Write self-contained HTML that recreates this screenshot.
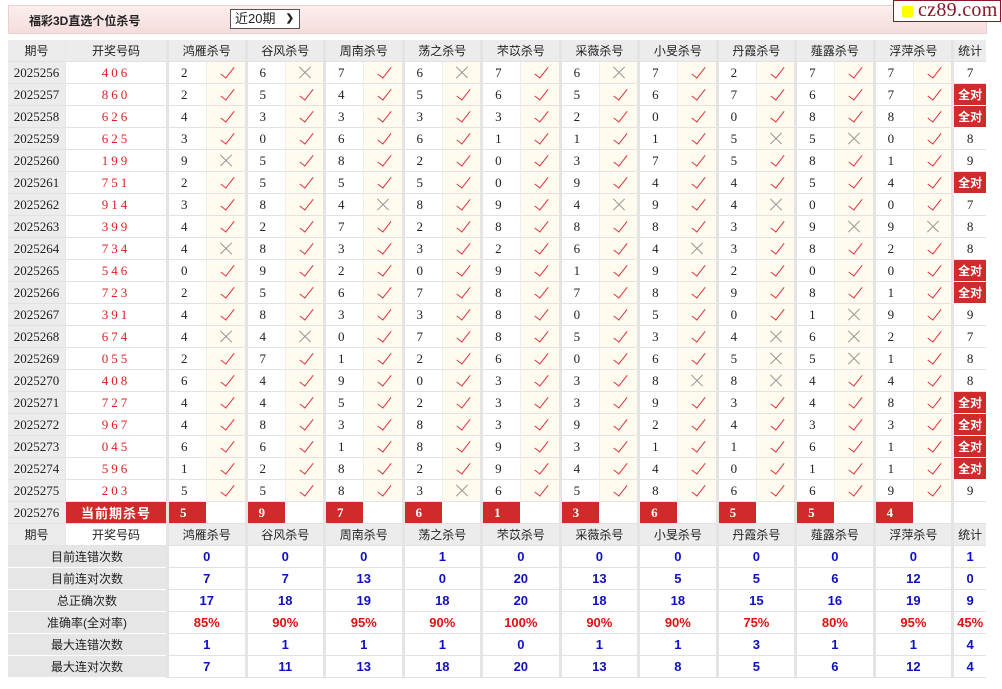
<!DOCTYPE html>
<html><head><meta charset="utf-8">
<style>
*{box-sizing:border-box;margin:0;padding:0}
body{width:1002px;height:689px;background:#fff;font-family:"Liberation Sans","Noto Sans CJK SC",sans-serif;font-size:12px;color:#222;position:relative;overflow:hidden}
.top{position:absolute;left:8px;top:5px;width:979px;height:29px;background:linear-gradient(#fbeeee,#f6dcdc);border:1px solid #ecd0d0}
.title{position:absolute;left:20px;top:6px;font-weight:bold;font-size:12px;color:#222}
.sel{position:absolute;left:221px;top:3px;width:70px;height:20px;border:1px solid #555;background:#fff;font-size:13px;line-height:18px;padding-left:4px}
.sel b{position:absolute;right:5px;top:0;font-size:10px}
.logo{position:absolute;left:893px;top:0;width:108px;height:22px;border:1px solid #8a1628;background:#fff;font-family:"Liberation Serif",serif;font-size:20px;color:#8a1628;line-height:19px;padding-left:24px;letter-spacing:.3px}
.logo i{position:absolute;left:8px;top:5px;width:11px;height:11px;background:#ff0}
table{position:absolute;left:8px;top:40px;border-collapse:separate;border-spacing:0;table-layout:fixed;width:978px}
td,th{height:22px;padding:0;border-bottom:1px solid #e2e2e2;text-align:center;font-weight:normal;white-space:nowrap;overflow:hidden}
th{background:#ececec;font-size:12px}
td.d{background:#ececec;font-family:"Liberation Serif",serif;font-size:13px}
td.k{font-family:"Liberation Serif",serif;font-size:13px;color:#e02020;letter-spacing:3px;border-left:1px solid #e8e8e8}
.g{border-left:3px solid #e4e4e4}
td.n{text-align:left;padding-left:12px;font-family:"Liberation Serif",serif;font-size:13px;background:#fff}
td.v,td.x{background:#fffbee;position:relative;border-left:1px solid #eee}
td.v:after{content:"";position:absolute;left:17px;top:2px;width:6px;height:13px;border-right:1.8px solid #e03040;border-bottom:1.8px solid #e03040;transform:rotate(38deg)}
td.x:before,td.x:after{content:"";position:absolute;left:11px;top:10px;width:16px;height:1px;background:#999;transform:rotate(45deg)}
td.x:after{transform:rotate(-45deg)}
td.t{font-family:"Liberation Serif",serif;font-size:13px;background:#fff}
td.q{background:#d02b2b;color:#fff;font-weight:bold;font-size:12px;border-bottom:1px solid #fff}
td.r{background:#d02b2b;color:#fff;font-weight:bold;font-family:"Liberation Serif",serif;font-size:13px;text-align:left;padding-left:11px}
td.e{background:#fff}
td.cur{background:#d02b2b;color:#fff;font-weight:bold;font-size:13px;letter-spacing:1px}
td.l{background:#e6e6e6;border-bottom:1px solid #fff;font-size:12px}
td.s{font-weight:bold;color:#1010c0;font-size:13px;background:#fff}
td.s.red{color:#e01010}
</style></head><body>
<div class="top"><div class="title">福彩3D直选个位杀号</div><div class="sel">近20期<b>&#10095;</b></div></div>
<div class="logo"><i></i>cz89.com</div>
<table>
<colgroup><col style="width:57px"><col style="width:101px">
<col style="width:40px"><col style="width:38.5px"><col style="width:40px"><col style="width:38.5px"><col style="width:40px"><col style="width:38.5px"><col style="width:40px"><col style="width:38.5px"><col style="width:40px"><col style="width:38.5px"><col style="width:40px"><col style="width:38.5px"><col style="width:40px"><col style="width:38.5px"><col style="width:40px"><col style="width:38.5px"><col style="width:40px"><col style="width:38.5px"><col style="width:40px"><col style="width:38.5px"><col style="width:35px"></colgroup>
<tr><th>期号</th><th style="border-left:1px solid #e8e8e8">开奖号码</th><th colspan="2" class="g">鸿雁杀号</th><th colspan="2" class="g">谷风杀号</th><th colspan="2" class="g">周南杀号</th><th colspan="2" class="g">荡之杀号</th><th colspan="2" class="g">芣苡杀号</th><th colspan="2" class="g">采薇杀号</th><th colspan="2" class="g">小旻杀号</th><th colspan="2" class="g">丹霞杀号</th><th colspan="2" class="g">薤露杀号</th><th colspan="2" class="g">浮萍杀号</th><th class="g">统计</th></tr>
<tr><td class="d">2025256</td><td class="k">406</td><td class="n g">2</td><td class="v"></td><td class="n g">6</td><td class="x"></td><td class="n g">7</td><td class="v"></td><td class="n g">6</td><td class="x"></td><td class="n g">7</td><td class="v"></td><td class="n g">6</td><td class="x"></td><td class="n g">7</td><td class="v"></td><td class="n g">2</td><td class="v"></td><td class="n g">7</td><td class="v"></td><td class="n g">7</td><td class="v"></td><td class="t g">7</td></tr>
<tr><td class="d">2025257</td><td class="k">860</td><td class="n g">2</td><td class="v"></td><td class="n g">5</td><td class="v"></td><td class="n g">4</td><td class="v"></td><td class="n g">5</td><td class="v"></td><td class="n g">6</td><td class="v"></td><td class="n g">5</td><td class="v"></td><td class="n g">6</td><td class="v"></td><td class="n g">7</td><td class="v"></td><td class="n g">6</td><td class="v"></td><td class="n g">7</td><td class="v"></td><td class="q g">全对</td></tr>
<tr><td class="d">2025258</td><td class="k">626</td><td class="n g">4</td><td class="v"></td><td class="n g">3</td><td class="v"></td><td class="n g">3</td><td class="v"></td><td class="n g">3</td><td class="v"></td><td class="n g">3</td><td class="v"></td><td class="n g">2</td><td class="v"></td><td class="n g">0</td><td class="v"></td><td class="n g">0</td><td class="v"></td><td class="n g">8</td><td class="v"></td><td class="n g">8</td><td class="v"></td><td class="q g">全对</td></tr>
<tr><td class="d">2025259</td><td class="k">625</td><td class="n g">3</td><td class="v"></td><td class="n g">0</td><td class="v"></td><td class="n g">6</td><td class="v"></td><td class="n g">6</td><td class="v"></td><td class="n g">1</td><td class="v"></td><td class="n g">1</td><td class="v"></td><td class="n g">1</td><td class="v"></td><td class="n g">5</td><td class="x"></td><td class="n g">5</td><td class="x"></td><td class="n g">0</td><td class="v"></td><td class="t g">8</td></tr>
<tr><td class="d">2025260</td><td class="k">199</td><td class="n g">9</td><td class="x"></td><td class="n g">5</td><td class="v"></td><td class="n g">8</td><td class="v"></td><td class="n g">2</td><td class="v"></td><td class="n g">0</td><td class="v"></td><td class="n g">3</td><td class="v"></td><td class="n g">7</td><td class="v"></td><td class="n g">5</td><td class="v"></td><td class="n g">8</td><td class="v"></td><td class="n g">1</td><td class="v"></td><td class="t g">9</td></tr>
<tr><td class="d">2025261</td><td class="k">751</td><td class="n g">2</td><td class="v"></td><td class="n g">5</td><td class="v"></td><td class="n g">5</td><td class="v"></td><td class="n g">5</td><td class="v"></td><td class="n g">0</td><td class="v"></td><td class="n g">9</td><td class="v"></td><td class="n g">4</td><td class="v"></td><td class="n g">4</td><td class="v"></td><td class="n g">5</td><td class="v"></td><td class="n g">4</td><td class="v"></td><td class="q g">全对</td></tr>
<tr><td class="d">2025262</td><td class="k">914</td><td class="n g">3</td><td class="v"></td><td class="n g">8</td><td class="v"></td><td class="n g">4</td><td class="x"></td><td class="n g">8</td><td class="v"></td><td class="n g">9</td><td class="v"></td><td class="n g">4</td><td class="x"></td><td class="n g">9</td><td class="v"></td><td class="n g">4</td><td class="x"></td><td class="n g">0</td><td class="v"></td><td class="n g">0</td><td class="v"></td><td class="t g">7</td></tr>
<tr><td class="d">2025263</td><td class="k">399</td><td class="n g">4</td><td class="v"></td><td class="n g">2</td><td class="v"></td><td class="n g">7</td><td class="v"></td><td class="n g">2</td><td class="v"></td><td class="n g">8</td><td class="v"></td><td class="n g">8</td><td class="v"></td><td class="n g">8</td><td class="v"></td><td class="n g">3</td><td class="v"></td><td class="n g">9</td><td class="x"></td><td class="n g">9</td><td class="x"></td><td class="t g">8</td></tr>
<tr><td class="d">2025264</td><td class="k">734</td><td class="n g">4</td><td class="x"></td><td class="n g">8</td><td class="v"></td><td class="n g">3</td><td class="v"></td><td class="n g">3</td><td class="v"></td><td class="n g">2</td><td class="v"></td><td class="n g">6</td><td class="v"></td><td class="n g">4</td><td class="x"></td><td class="n g">3</td><td class="v"></td><td class="n g">8</td><td class="v"></td><td class="n g">2</td><td class="v"></td><td class="t g">8</td></tr>
<tr><td class="d">2025265</td><td class="k">546</td><td class="n g">0</td><td class="v"></td><td class="n g">9</td><td class="v"></td><td class="n g">2</td><td class="v"></td><td class="n g">0</td><td class="v"></td><td class="n g">9</td><td class="v"></td><td class="n g">1</td><td class="v"></td><td class="n g">9</td><td class="v"></td><td class="n g">2</td><td class="v"></td><td class="n g">0</td><td class="v"></td><td class="n g">0</td><td class="v"></td><td class="q g">全对</td></tr>
<tr><td class="d">2025266</td><td class="k">723</td><td class="n g">2</td><td class="v"></td><td class="n g">5</td><td class="v"></td><td class="n g">6</td><td class="v"></td><td class="n g">7</td><td class="v"></td><td class="n g">8</td><td class="v"></td><td class="n g">7</td><td class="v"></td><td class="n g">8</td><td class="v"></td><td class="n g">9</td><td class="v"></td><td class="n g">8</td><td class="v"></td><td class="n g">1</td><td class="v"></td><td class="q g">全对</td></tr>
<tr><td class="d">2025267</td><td class="k">391</td><td class="n g">4</td><td class="v"></td><td class="n g">8</td><td class="v"></td><td class="n g">3</td><td class="v"></td><td class="n g">3</td><td class="v"></td><td class="n g">8</td><td class="v"></td><td class="n g">0</td><td class="v"></td><td class="n g">5</td><td class="v"></td><td class="n g">0</td><td class="v"></td><td class="n g">1</td><td class="x"></td><td class="n g">9</td><td class="v"></td><td class="t g">9</td></tr>
<tr><td class="d">2025268</td><td class="k">674</td><td class="n g">4</td><td class="x"></td><td class="n g">4</td><td class="x"></td><td class="n g">0</td><td class="v"></td><td class="n g">7</td><td class="v"></td><td class="n g">8</td><td class="v"></td><td class="n g">5</td><td class="v"></td><td class="n g">3</td><td class="v"></td><td class="n g">4</td><td class="x"></td><td class="n g">6</td><td class="x"></td><td class="n g">2</td><td class="v"></td><td class="t g">7</td></tr>
<tr><td class="d">2025269</td><td class="k">055</td><td class="n g">2</td><td class="v"></td><td class="n g">7</td><td class="v"></td><td class="n g">1</td><td class="v"></td><td class="n g">2</td><td class="v"></td><td class="n g">6</td><td class="v"></td><td class="n g">0</td><td class="v"></td><td class="n g">6</td><td class="v"></td><td class="n g">5</td><td class="x"></td><td class="n g">5</td><td class="x"></td><td class="n g">1</td><td class="v"></td><td class="t g">8</td></tr>
<tr><td class="d">2025270</td><td class="k">408</td><td class="n g">6</td><td class="v"></td><td class="n g">4</td><td class="v"></td><td class="n g">9</td><td class="v"></td><td class="n g">0</td><td class="v"></td><td class="n g">3</td><td class="v"></td><td class="n g">3</td><td class="v"></td><td class="n g">8</td><td class="x"></td><td class="n g">8</td><td class="x"></td><td class="n g">4</td><td class="v"></td><td class="n g">4</td><td class="v"></td><td class="t g">8</td></tr>
<tr><td class="d">2025271</td><td class="k">727</td><td class="n g">4</td><td class="v"></td><td class="n g">4</td><td class="v"></td><td class="n g">5</td><td class="v"></td><td class="n g">2</td><td class="v"></td><td class="n g">3</td><td class="v"></td><td class="n g">3</td><td class="v"></td><td class="n g">9</td><td class="v"></td><td class="n g">3</td><td class="v"></td><td class="n g">4</td><td class="v"></td><td class="n g">8</td><td class="v"></td><td class="q g">全对</td></tr>
<tr><td class="d">2025272</td><td class="k">967</td><td class="n g">4</td><td class="v"></td><td class="n g">8</td><td class="v"></td><td class="n g">3</td><td class="v"></td><td class="n g">8</td><td class="v"></td><td class="n g">3</td><td class="v"></td><td class="n g">9</td><td class="v"></td><td class="n g">2</td><td class="v"></td><td class="n g">4</td><td class="v"></td><td class="n g">3</td><td class="v"></td><td class="n g">3</td><td class="v"></td><td class="q g">全对</td></tr>
<tr><td class="d">2025273</td><td class="k">045</td><td class="n g">6</td><td class="v"></td><td class="n g">6</td><td class="v"></td><td class="n g">1</td><td class="v"></td><td class="n g">8</td><td class="v"></td><td class="n g">9</td><td class="v"></td><td class="n g">3</td><td class="v"></td><td class="n g">1</td><td class="v"></td><td class="n g">1</td><td class="v"></td><td class="n g">6</td><td class="v"></td><td class="n g">1</td><td class="v"></td><td class="q g">全对</td></tr>
<tr><td class="d">2025274</td><td class="k">596</td><td class="n g">1</td><td class="v"></td><td class="n g">2</td><td class="v"></td><td class="n g">8</td><td class="v"></td><td class="n g">2</td><td class="v"></td><td class="n g">9</td><td class="v"></td><td class="n g">4</td><td class="v"></td><td class="n g">4</td><td class="v"></td><td class="n g">0</td><td class="v"></td><td class="n g">1</td><td class="v"></td><td class="n g">1</td><td class="v"></td><td class="q g">全对</td></tr>
<tr><td class="d">2025275</td><td class="k">203</td><td class="n g">5</td><td class="v"></td><td class="n g">5</td><td class="v"></td><td class="n g">8</td><td class="v"></td><td class="n g">3</td><td class="x"></td><td class="n g">6</td><td class="v"></td><td class="n g">5</td><td class="v"></td><td class="n g">8</td><td class="v"></td><td class="n g">6</td><td class="v"></td><td class="n g">6</td><td class="v"></td><td class="n g">9</td><td class="v"></td><td class="t g">9</td></tr>
<tr><td class="d">2025276</td><td class="cur" style="border-left:1px solid #e8e8e8">当前期杀号</td><td class="r g">5</td><td class="e"></td><td class="r g">9</td><td class="e"></td><td class="r g">7</td><td class="e"></td><td class="r g">6</td><td class="e"></td><td class="r g">1</td><td class="e"></td><td class="r g">3</td><td class="e"></td><td class="r g">6</td><td class="e"></td><td class="r g">5</td><td class="e"></td><td class="r g">5</td><td class="e"></td><td class="r g">4</td><td class="e"></td><td class="t g"></td></tr>
<tr><th>期号</th><th style="border-left:1px solid #e8e8e8;background:#fff">开奖号码</th><th colspan="2" class="g">鸿雁杀号</th><th colspan="2" class="g">谷风杀号</th><th colspan="2" class="g">周南杀号</th><th colspan="2" class="g">荡之杀号</th><th colspan="2" class="g">芣苡杀号</th><th colspan="2" class="g">采薇杀号</th><th colspan="2" class="g">小旻杀号</th><th colspan="2" class="g">丹霞杀号</th><th colspan="2" class="g">薤露杀号</th><th colspan="2" class="g">浮萍杀号</th><th class="g">统计</th></tr>
<tr><td class="l" colspan="2">目前连错次数</td><td class="s g" colspan="2">0</td><td class="s g" colspan="2">0</td><td class="s g" colspan="2">0</td><td class="s g" colspan="2">1</td><td class="s g" colspan="2">0</td><td class="s g" colspan="2">0</td><td class="s g" colspan="2">0</td><td class="s g" colspan="2">0</td><td class="s g" colspan="2">0</td><td class="s g" colspan="2">0</td><td class="s g">1</td></tr>
<tr><td class="l" colspan="2">目前连对次数</td><td class="s g" colspan="2">7</td><td class="s g" colspan="2">7</td><td class="s g" colspan="2">13</td><td class="s g" colspan="2">0</td><td class="s g" colspan="2">20</td><td class="s g" colspan="2">13</td><td class="s g" colspan="2">5</td><td class="s g" colspan="2">5</td><td class="s g" colspan="2">6</td><td class="s g" colspan="2">12</td><td class="s g">0</td></tr>
<tr><td class="l" colspan="2">总正确次数</td><td class="s g" colspan="2">17</td><td class="s g" colspan="2">18</td><td class="s g" colspan="2">19</td><td class="s g" colspan="2">18</td><td class="s g" colspan="2">20</td><td class="s g" colspan="2">18</td><td class="s g" colspan="2">18</td><td class="s g" colspan="2">15</td><td class="s g" colspan="2">16</td><td class="s g" colspan="2">19</td><td class="s g">9</td></tr>
<tr><td class="l" colspan="2">准确率(全对率)</td><td class="s red g" colspan="2">85%</td><td class="s red g" colspan="2">90%</td><td class="s red g" colspan="2">95%</td><td class="s red g" colspan="2">90%</td><td class="s red g" colspan="2">100%</td><td class="s red g" colspan="2">90%</td><td class="s red g" colspan="2">90%</td><td class="s red g" colspan="2">75%</td><td class="s red g" colspan="2">80%</td><td class="s red g" colspan="2">95%</td><td class="s red g">45%</td></tr>
<tr><td class="l" colspan="2">最大连错次数</td><td class="s g" colspan="2">1</td><td class="s g" colspan="2">1</td><td class="s g" colspan="2">1</td><td class="s g" colspan="2">1</td><td class="s g" colspan="2">0</td><td class="s g" colspan="2">1</td><td class="s g" colspan="2">1</td><td class="s g" colspan="2">3</td><td class="s g" colspan="2">1</td><td class="s g" colspan="2">1</td><td class="s g">4</td></tr>
<tr><td class="l" colspan="2">最大连对次数</td><td class="s g" colspan="2">7</td><td class="s g" colspan="2">11</td><td class="s g" colspan="2">13</td><td class="s g" colspan="2">18</td><td class="s g" colspan="2">20</td><td class="s g" colspan="2">13</td><td class="s g" colspan="2">8</td><td class="s g" colspan="2">5</td><td class="s g" colspan="2">6</td><td class="s g" colspan="2">12</td><td class="s g">4</td></tr>
</table>
</body></html>
